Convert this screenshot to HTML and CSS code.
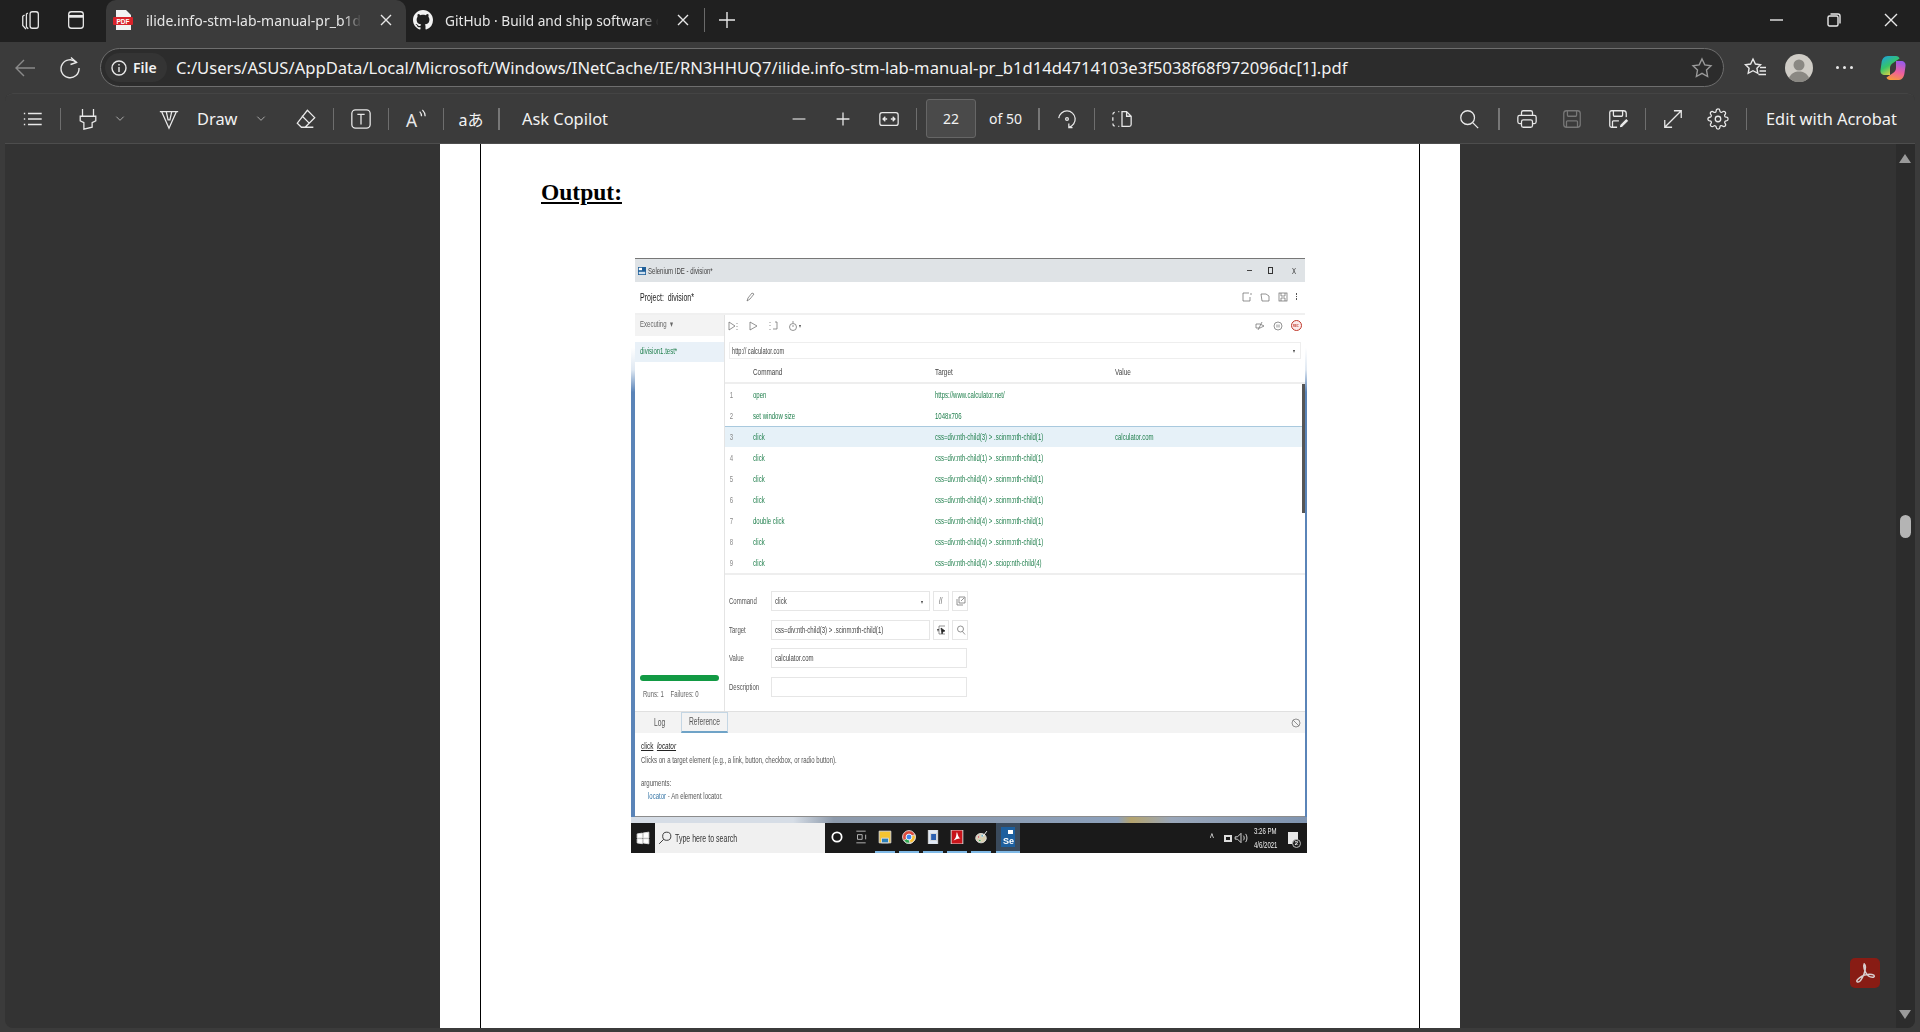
FILE: index.html
```html
<!DOCTYPE html>
<html lang="en">
	<head>
		<meta charset="UTF-8" />
		<title>ilide.info-stm-lab-manual-pr_b1d14d4714103e3f5038f68f972096dc[1].pdf</title>
		<link rel="stylesheet" href="styles.css">
	</head>
	<body>
		<!-- tab strip -->
		<div class="tabstrip">
			<svg class="ico strip-ico" viewBox="0 0 24 24"><rect x="11" y="3" width="9" height="18" rx="2.500"/><path d="M8.500 4.500L7 5.500v14l2 2M5 6.500L3 8v10l3.500 4"/></svg>
			<svg class="ico strip-ico" viewBox="0 0 24 24"><rect x="4" y="3" width="16" height="18" rx="3"/><path d="M4 8h16" stroke-width="3"/></svg>
			<div class="tab tab-active">
				<svg class="fav" viewBox="0 0 20 20"><path d="M3 0h10l5 5v15H3z" fill="#f2f2f2"/><rect x="0" y="7" width="20" height="8" rx="1" fill="#d8232a"/><text x="10" y="13.500" class="fav-text">PDF</text></svg>
				<span class="tab-title">ilide.info-stm-lab-manual-pr_b1d</span>
				<svg class="ico tab-x" viewBox="0 0 12 12"><path d="M1 1l10 10M11 1L1 11"/></svg>
			</div>
			<div class="tab tab-github">
				<svg class="fav" viewBox="0 0 16 16"><path fill="#f2f2f2" d="M8 0C3.58 0 0 3.58 0 8c0 3.54 2.29 6.53 5.47 7.59.4.07.55-.17.55-.38 0-.19-.01-.82-.01-1.49-2.01.37-2.53-.49-2.69-.94-.09-.23-.48-.94-.82-1.13-.28-.15-.68-.52-.01-.53.63-.01 1.08.58 1.23.82.72 1.21 1.87.87 2.33.66.07-.52.28-.87.51-1.07-1.78-.2-3.64-.89-3.64-3.95 0-.87.31-1.59.82-2.15-.08-.2-.36-1.02.08-2.12 0 0 .67-.21 2.2.82.64-.18 1.32-.27 2-.27.68 0 1.36.09 2 .27 1.53-1.04 2.2-.82 2.2-.82.44 1.1.16 1.92.08 2.12.51.56.82 1.27.82 2.15 0 3.07-1.87 3.75-3.65 3.95.29.25.54.730.54 1.48 0 1.07-.01 1.93-.01 2.2 0 .21.15.46.55.38A8.013 8.013 0 0016 8c0-4.42-3.58-8-8-8z"/></svg>
				<span class="tab-title">GitHub · Build and ship software c</span>
				<svg class="ico tab-x" viewBox="0 0 12 12"><path d="M1 1l10 10M11 1L1 11"/></svg>
			</div>
			<i class="tab-sep"></i>
			<svg class="ico new-tab" viewBox="0 0 16 16"><path d="M8 0v16M0 8h16"/></svg>
			<div class="win-controls">
				<svg class="ico" viewBox="0 0 14 14"><path d="M0 7h13"/></svg>
				<svg class="ico" viewBox="0 0 14 14"><rect x="1" y="3" width="10" height="10" rx="1.500"/><path d="M3.500 1h7.500a2 2 0 0 1 2 2v7.500"/></svg>
				<svg class="ico" viewBox="0 0 14 14"><path d="M1 1l12 12M13 1L1 13"/></svg>
			</div>
		</div>

		<!-- address bar -->
		<div class="navbar">
			<svg class="ico nav-btn dim" viewBox="0 0 24 24"><path d="M22 12H3M11 4l-8 8 8 8"/></svg>
			<svg class="ico nav-btn" viewBox="0 0 24 24"><path d="M18.500 6.500A9 9 0 1 0 21 12"/><path d="M13 1.500l5.500 5-6 2"/></svg>
			<div class="address">
				<div class="file-pill">
					<svg class="ico info" viewBox="0 0 16 16"><circle cx="8" cy="8" r="7"/><path d="M8 7v5M8 4v1.500"/></svg>
					<b>File</b>
				</div>
				<span class="url">C:/Users/ASUS/AppData/Local/Microsoft/Windows/INetCache/IE/RN3HHUQ7/ilide.info-stm-lab-manual-pr_b1d14d4714103e3f5038f68f972096dc[1].pdf</span>
				<svg class="ico star" viewBox="0 0 24 24"><path d="M12 3l2.800 5.900 6.200.8-4.500 4.400 1.100 6.400-5.600-3.100-5.600 3.100 1.100-6.400L3 9.700l6.200-.8z"/></svg>
			</div>
			<svg class="ico nav-side fav-list" viewBox="0 0 24 24"><path d="M10 3l2.400 5 5.100.7-3.600 3.500.9 5.100-4.800-2.600-4.800 2.600.9-5.100L2.500 8.700l5.100-.7zM17 11.500h6M16.500 15h6.500M15.500 18.500H23"/></svg>
			<svg class="avatar" viewBox="0 0 28 28"><circle cx="14" cy="14" r="14" fill="#cfccc6"/><circle cx="14" cy="11" r="5.500" fill="#8a8883"/><path d="M4 24c2-5 6-6.500 10-6.500s8 1.500 10 6.500a14 14 0 0 1-20 0z" fill="#8a8883"/></svg>
			<div class="dots"><i></i><i></i><i></i></div>
			<svg class="copilot" viewBox="0 0 28 28">
				<defs>
					<linearGradient id="cpa" x1="0" y1="0" x2=".6" y2="1"><stop offset="0" stop-color="#1b9de8"/><stop offset=".55" stop-color="#35c46a"/><stop offset="1" stop-color="#f4d03f"/></linearGradient>
					<linearGradient id="cpb" x1=".6" y1="0" x2=".3" y2="1"><stop offset="0" stop-color="#9a5be8"/><stop offset=".55" stop-color="#ef5f9c"/><stop offset="1" stop-color="#f79a3c"/></linearGradient>
				</defs>
				<path fill="url(#cpa)" d="M9 2h8c2 0 3 1 3.500 2.500L14 9c-2 1.300-3 3-3 5v7H6c-3 0-5-2-4.500-5l1-7C3 5 5 2 9 2z"/>
				<path fill="url(#cpb)" d="M19 26h-8c-2 0-3-1-3.500-2.500L14 19c2-1.300 3-3 3-5V7h5c3 0 5 2 4.500 5l-1 7c-.5 4-2.500 7-5.500 7z"/>
			</svg>
		</div>

		<!-- pdf toolbar and viewer -->
		<div class="pdf-panel">
			<div class="pdfbar">
				<div class="group group-left">
					<svg class="ico btn" viewBox="0 0 24 24"><path d="M6.500 6h15M6.500 12h15M6.500 18h15M2 6h1.500M2 12h1.500M2 18h1.500"/></svg>
					<i class="sep"></i>
					<svg class="ico btn" viewBox="0 0 24 24"><path d="M6 1v8h12V1M3.500 9h17v5l-4 2v5l-9 2v-7l-4-2z"/></svg>
					<svg class="ico chev ml-6" viewBox="0 0 12 12"><path d="M2 4l4 4 4-4"/></svg>
					<svg class="ico btn ml-23" viewBox="0 0 24 24"><path d="M2 4h20M4 4l8 18 8-18M9 4l2 9h2l2-9"/></svg>
					<span class="tb-text draw-label">Draw</span>
					<svg class="ico chev ml-16" viewBox="0 0 12 12"><path d="M2 4l4 4 4-4"/></svg>
					<svg class="ico btn ml-19" viewBox="0 0 24 24"><path d="M13.500 2.500l8 8L11 21H7l-4.500-4.500zM7.500 8.500l8 8M7 21h13"/></svg>
					<i class="sep"></i>
					<svg class="ico btn" viewBox="0 0 24 24"><rect x="2" y="2" width="20" height="20" rx="4"/><path d="M8 7h8M12 7v11"/></svg>
					<i class="sep"></i>
					<svg class="ico btn" viewBox="0 0 24 24"><text x="1" y="21" class="icon-letter">A</text><path d="M16 4c1.500 1.500 2 3 2 5M19 2c2 2 3 4.500 3 7"/></svg>
					<i class="sep"></i>
					<span class="btn translate">aあ</span>
					<i class="sep sep-strong"></i>
					<span class="tb-text ask">Ask Copilot</span>
				</div>
				<div class="group group-center">
					<svg class="ico btn" viewBox="0 0 24 24"><path d="M5 12h14" stroke="#bdbdbd"/></svg>
					<svg class="ico btn ml-8" viewBox="0 0 24 24"><path d="M5 12h14M12 5v14"/></svg>
					<svg class="ico btn ml-10" viewBox="0 0 24 24"><rect x="2" y="5" width="20" height="14" rx="2.500"/><path d="M10 12H5.500M8 9.500L5.500 12 8 14.500M14 12h4.500M16 9.500l2.500 2.500-2.500 2.500"/></svg>
					<i class="sep"></i>
					<div class="page-box">22</div>
					<span class="tb-text of-pages">of 50</span>
					<i class="sep sep-strong ml-16"></i>
					<svg class="ico btn" viewBox="0 0 24 24"><path d="M3 11a9 9 0 1 1 11 10M14 17v4.500h4"/><circle cx="12" cy="12" r="1.500"/></svg>
					<i class="sep"></i>
					<svg class="ico btn" viewBox="0 0 24 24"><path d="M12 4h5l5 5v9a2 2 0 0 1-2 2h-8zM17 4v5h5M9 4H8M4 4.500C3 5 2 5.500 2 7M2 10v4M2 17c0 1.500.5 2.500 2 2.800M8 20h1"/></svg>
				</div>
				<div class="group group-right">
					<svg class="ico btn" viewBox="0 0 24 24"><circle cx="10.500" cy="10.500" r="7.500"/><path d="M16 16l6 6"/></svg>
					<i class="sep sep-strong ml-11"></i>
					<svg class="ico btn" viewBox="0 0 24 24"><path d="M6 8V5a2 2 0 0 1 2-2h8a2 2 0 0 1 2 2v3M6 17H4a2 2 0 0 1-2-2v-5a2 2 0 0 1 2-2h16a2 2 0 0 1 2 2v5a2 2 0 0 1-2 2h-2"/><rect x="6" y="13" width="12" height="8" rx="2"/></svg>
					<svg class="ico btn btn-off ml-9" viewBox="0 0 24 24"><rect x="3" y="3" width="18" height="18" rx="3"/><path d="M7 3v5a1 1 0 0 0 1 1h8a1 1 0 0 0 1-1V3M6 21v-6a1 1 0 0 1 1-1h10a1 1 0 0 1 1 1v6"/></svg>
					<svg class="ico btn ml-10" viewBox="0 0 24 24"><path d="M11 21H5a2 2 0 0 1-2-2V5a2 2 0 0 1 2-2h13a3 3 0 0 1 3 3v4M7 3v5a1 1 0 0 0 1 1h8a1 1 0 0 0 1-1V3M6 21v-6a1 1 0 0 1 1-1h6"/><path class="pen" d="M13 22l1-4 7-7 3 3-7 7z"/></svg>
					<i class="sep"></i>
					<svg class="ico btn" viewBox="0 0 24 24"><path d="M3 21L21 3M13 3h8v8M3 13v8h8"/></svg>
					<svg class="ico btn ml-9" viewBox="0 0 24 24"><circle cx="12" cy="12" r="3"/><path d="M19.400 15a1.650 1.650 0 0 0 .33 1.820l.06.06a2 2 0 0 1 0 2.830 2 2 0 0 1-2.830 0l-.06-.06a1.650 1.650 0 0 0-1.820-.33 1.650 1.650 0 0 0-1 1.510V21a2 2 0 0 1-2 2 2 2 0 0 1-2-2v-.09A1.650 1.650 0 0 0 9 19.400a1.650 1.650 0 0 0-1.820.33l-.06.06a2 2 0 0 1-2.830 0 2 2 0 0 1 0-2.830l.06-.06a1.650 1.650 0 0 0 .33-1.820 1.650 1.650 0 0 0-1.510-1H3a2 2 0 0 1-2-2 2 2 0 0 1 2-2h.09A1.650 1.650 0 0 0 4.600 9a1.650 1.650 0 0 0-.33-1.820l-.06-.06a2 2 0 0 1 0-2.830 2 2 0 0 1 2.830 0l.06.06a1.650 1.650 0 0 0 1.820.33H9a1.650 1.650 0 0 0 1-1.510V3a2 2 0 0 1 2-2 2 2 0 0 1 2 2v.09a1.650 1.650 0 0 0 1 1.510 1.650 1.650 0 0 0 1.820-.33l.06-.06a2 2 0 0 1 2.830 0 2 2 0 0 1 0 2.830l-.06.06a1.650 1.650 0 0 0-.33 1.820V9a1.650 1.650 0 0 0 1.510 1H21a2 2 0 0 1 2 2 2 2 0 0 1-2 2h-.09a1.650 1.650 0 0 0-1.510 1z"/></svg>
					<i class="sep ml-10"></i>
					<span class="tb-text edit">Edit with Acrobat</span>
				</div>
			</div>

			<div class="viewer">
				<div class="page">
					<div class="page-frame">
						<h1 class="output-title">Output:</h1>

						<!-- screenshot pasted in the pdf -->
						<div class="shot">
							<div class="win-edge">
								<div class="win">
									<div class="win-title">
										<svg class="se-logo" viewBox="0 0 10 10"><rect width="10" height="10" fill="#1f5f99"/><rect x="1" y="1" width="4" height="3" fill="#fff"/><rect x="1" y="6" width="8" height="3" fill="#cfe0ef"/></svg>
										<span>Selenium IDE - division*</span>
										<div class="win-btns"><i class="w-min"></i><i class="w-max"></i><span class="w-close">X</span></div>
									</div>
									<div class="project">
										<span class="project-name">Project:&nbsp; division*</span>
										<svg class="mini pencil" viewBox="0 0 10 10"><path d="M2 9l1-3 4-5 2 1-4 5z"/></svg>
										<div class="project-icons">
											<svg class="mini" viewBox="0 0 10 10"><path d="M7 1H1v8h7V5M9 1v2"/></svg>
											<svg class="mini" viewBox="0 0 10 10"><path d="M1 2h5l3 2v5H2z"/></svg>
											<svg class="mini" viewBox="0 0 10 10"><rect x="1" y="1" width="8" height="8"/><path d="M3 1v3h4V1M3 9V6h4v3"/></svg>
											<div class="kebab"><i></i><i></i><i></i></div>
										</div>
									</div>
									<div class="win-body">
										<div class="side">
											<div class="side-head"><span>Executing &nbsp;▾</span></div>
											<div class="side-item"><span>division1.test*</span></div>
											<div class="progress"></div>
											<div class="runs"><span>Runs: 1 &nbsp; &nbsp;Failures: 0</span></div>
										</div>
										<div class="main">
											<div class="run-bar">
												<svg class="mini" viewBox="0 0 10 10"><path d="M1 1l6 4-6 4zM9 2v1M9 5v1M9 8v1"/></svg>
												<svg class="mini" viewBox="0 0 10 10"><path d="M2 1l7 4-7 4z"/></svg>
												<svg class="mini" viewBox="0 0 10 10"><path d="M2 1v1M2 4v1M2 8v1M7 1h2v7H5"/></svg>
												<svg class="mini" viewBox="0 0 10 10"><circle cx="5" cy="6" r="3.500"/><path d="M4 1h2M5 6V4"/></svg>
												<span class="caret">▾</span>
												<div class="run-right">
													<svg class="mini" viewBox="0 0 10 10"><path d="M1 3h4l4 2-4 2H1zM7 1L3 9"/></svg>
													<svg class="mini" viewBox="0 0 10 10"><circle cx="5" cy="5" r="4"/><path d="M4 3.500v3M6 3.500v3"/></svg>
													<div class="rec"><span>REC</span></div>
												</div>
											</div>
											<div class="url-input"><span>http:// calculator.com</span><span class="caret url-caret">▾</span></div>
											<div class="cmd-head">
												<span class="col-cmd">Command</span>
												<span class="col-target">Target</span>
												<span class="col-value">Value</span>
											</div>
											<div class="cmd-rows">
												<div class="cmd"><span class="num">1</span><span class="col-cmd">open</span><span class="col-target">https://www.calculator.net/</span></div>
												<div class="cmd"><span class="num">2</span><span class="col-cmd">set window size</span><span class="col-target">1048x706</span></div>
												<div class="cmd cmd-on"><span class="num">3</span><span class="col-cmd">click</span><span class="col-target">css=div:nth-child(3) &gt; .scinm:nth-child(1)</span><span class="col-value">calculator.com</span></div>
												<div class="cmd"><span class="num">4</span><span class="col-cmd">click</span><span class="col-target">css=div:nth-child(1) &gt; .scinm:nth-child(1)</span></div>
												<div class="cmd"><span class="num">5</span><span class="col-cmd">click</span><span class="col-target">css=div:nth-child(4) &gt; .scinm:nth-child(1)</span></div>
												<div class="cmd"><span class="num">6</span><span class="col-cmd">click</span><span class="col-target">css=div:nth-child(4) &gt; .scinm:nth-child(1)</span></div>
												<div class="cmd"><span class="num">7</span><span class="col-cmd">double click</span><span class="col-target">css=div:nth-child(4) &gt; .scinm:nth-child(1)</span></div>
												<div class="cmd"><span class="num">8</span><span class="col-cmd">click</span><span class="col-target">css=div:nth-child(4) &gt; .scinm:nth-child(1)</span></div>
												<div class="cmd"><span class="num">9</span><span class="col-cmd">click</span><span class="col-target">css=div:nth-child(4) &gt; .sciop:nth-child(4)</span></div>
												<i class="cmd-scroll"></i>
											</div>
											<div class="form">
												<div class="form-row">
													<span class="form-label">Command</span>
													<div class="field field-short"><span>click</span><span class="caret url-caret">▾</span></div>
													<div class="field-btn"><span>//</span></div>
													<div class="field-btn"><svg class="mini" viewBox="0 0 10 10"><path d="M3 1h6v6H3zM1 3v6h6M5 5l3-3"/></svg></div>
												</div>
												<div class="form-row">
													<span class="form-label">Target</span>
													<div class="field field-short"><span>css=div:nth-child(3) &gt; .scinm:nth-child(1)</span><span class="caret url-caret">▾</span></div>
													<div class="field-btn"><svg class="mini" viewBox="0 0 10 10"><path d="M8 1H2v8h6"/><path class="picker" d="M4 3l4 3-2 .5L5 9z"/></svg></div>
													<div class="field-btn"><svg class="mini" viewBox="0 0 10 10"><circle cx="4.500" cy="4" r="3"/><path d="M6.500 6.500L9 9.500"/></svg></div>
												</div>
												<div class="form-row">
													<span class="form-label">Value</span>
													<div class="field"><span>calculator.com</span></div>
												</div>
												<div class="form-row">
													<span class="form-label">Description</span>
													<div class="field"></div>
												</div>
											</div>
										</div>
									</div>
									<div class="log-tabs">
										<span class="log-tab">Log</span>
										<div class="ref-tab"><span>Reference</span></div>
										<svg class="mini ban" viewBox="0 0 10 10"><circle cx="5" cy="5" r="4"/><path d="M2.200 2.200l5.600 5.600"/></svg>
									</div>
									<div class="ref">
										<div class="ref-title"><span><u>click</u> &nbsp;<u><em>locator</em></u></span></div>
										<div class="ref-line"><span>Clicks on a target element (e.g., a link, button, checkbox, or radio button).</span></div>
										<div class="ref-line ref-args"><span>arguments:</span></div>
										<div class="ref-line ref-arg"><span><b>locator</b> - An element locator.</span></div>
									</div>
								</div>
							</div>
							<div class="behind"></div>
							<div class="taskbar">
								<div class="start"><svg class="t-ico" viewBox="0 0 12 12"><path fill="#fff" d="M1 2.500l4.500-.7V6H1zM6.200 1.700L11 1v5H6.200zM1 6.700h4.500v4.200L1 10.200zM6.200 6.700H11V11l-4.800-.7z"/></svg></div>
								<div class="search">
									<svg class="t-ico search-ico" viewBox="0 0 12 12"><circle cx="7.500" cy="4.500" r="3.500"/><path d="M5 7l-4 4"/></svg>
									<span>Type here to search</span>
								</div>
								<div class="task"><svg class="t-ico" viewBox="0 0 12 12"><circle class="cortana" cx="6" cy="6" r="4"/></svg></div>
								<div class="task"><svg class="t-ico" viewBox="0 0 12 12"><path class="taskview" d="M2 1h8M2 11h8M3 4h4v4H3zM10 4v4"/></svg></div>
								<div class="task task-open"><svg class="t-ico" viewBox="0 0 12 12"><path fill="#f4c430" d="M1 1h10v10H1z"/><path fill="#2a7fb8" d="M3 7h6v4H3z"/></svg></div>
								<div class="task task-open"><svg class="t-ico" viewBox="0 0 12 12"><circle cx="6" cy="6" r="5.500" fill="#dd4b3e"/><path fill="#2da94f" d="M6 6L1.500 9A5.500 5.500 0 0 0 7 11.400z"/><path fill="#fbc02d" d="M6 6l5 -2a5.500 5.500 0 0 1-4 7.400z"/><circle cx="6" cy="6" r="2.500" fill="#3f85f0" stroke="#fff" stroke-width=".8"/></svg></div>
								<div class="task task-open"><svg class="t-ico" viewBox="0 0 12 12"><path fill="#dfe8f5" d="M2 0h8v12H2z"/><path fill="#2b5fb0" d="M4 3h5v6H4z"/></svg></div>
								<div class="task task-open"><svg class="t-ico" viewBox="0 0 12 12"><rect x="1" y="0" width="10" height="12" fill="#c8141a"/><path class="acro" d="M6 2c-1 0 .5 4-3 7 3-1 4-2 6-1.500C7 6.500 6.500 3 6 2z"/></svg></div>
								<div class="task task-open"><svg class="t-ico" viewBox="0 0 12 12"><ellipse cx="6" cy="7" rx="4.500" ry="4" fill="#d9cfae"/><circle cx="4" cy="6" r="1" fill="#d33"/><circle cx="7" cy="5" r="1" fill="#29b"/><circle cx="5" cy="9" r="1" fill="#3a3"/><path d="M8 5l3-4" stroke="#fff"/></svg></div>
								<div class="task task-open task-se"><div class="se-tile"><i></i><span>Se</span></div></div>
								<div class="tray">
									<span class="tray-caret">^</span>
									<i class="tray-batt"></i>
									<svg class="t-ico tray-vol" viewBox="0 0 12 12"><path d="M1 5h2l3-3v8L3 7H1zM8 4c1 1 1 3 0 4M10 2.500c1.500 2 1.500 5 0 7"/></svg>
									<div class="clock"><span>3:26 PM</span><span>4/6/2021</span></div>
									<div class="notif"><i></i><b>2</b></div>
								</div>
							</div>
						</div>
					</div>
				</div>
				<div class="scrollbar">
					<i class="arrow-up"></i>
					<i class="thumb"></i>
					<i class="arrow-down"></i>
				</div>
				<div class="acrobat-fab">
					<svg viewBox="0 0 24 24"><path d="M12 3c-1.800 0-1.500 3.500.2 7.500 1.700 3.800 4.300 5.800 7.300 5.800 2.500 0 2.500-2.300-.5-2.800-3.500-.5-9 .8-12.500 3.300-2.500 1.800-3.500 3.700-2 4.200 1.700.5 4.500-3 6.500-8 1.500-3.800 2.500-10-.5-10z"/></svg>
				</div>
			</div>
		</div>
	</body>
</html>
```

FILE: styles.css
```css
* {
	box-sizing: border-box;
}
html, body {
	margin: 0;
	height: 1032px;
	overflow: hidden;
}
body {
	background: #3b3b3b;
	color: #f2f2f2;
	font-family: "Noto Sans", "Open Sans", sans-serif;
	display: flex;
	flex-direction: column;
}
.ico {
	fill: none;
	stroke: #e8e8e8;
	stroke-width: 1.4;
	flex: none;
	overflow: visible;
}

/* tab strip */
.tabstrip {
	height: 42px;
	background: #202020;
	display: flex;
	align-items: center;
	padding-left: 20px;
	flex: none;
}
.strip-ico {
	width: 22px;
	height: 22px;
	margin: 0 23px 2px 0;
}
.strip-ico + .strip-ico {
	margin-right: 19px;
}
.tab {
	width: 290px;
	height: 42px;
	display: flex;
	align-items: center;
	padding: 0 12px 2px 10px;
	font-size: 14px;
	color: #e6e6e6;
}
.tab-active {
	width: 300px;
	background: #3b3b3b;
	border-radius: 10px 10px 0 0;
	padding: 0 14px 2px 7px;
}
.tab-github {
	padding: 0 7px 2px 7px;
	font-size: 13.700px;
}
.fav {
	width: 20px;
	height: 20px;
	flex: none;
	margin-right: 13px;
}
.tab-github .fav {
	margin-right: 12px;
}
.fav-text {
	font-family: "Liberation Sans", sans-serif;
	font-size: 6.500px;
	font-weight: bold;
	fill: #fff;
	text-anchor: middle;
}
.tab-title {
	flex: 1;
	white-space: nowrap;
	-webkit-mask-image: linear-gradient(to right, #000 90%, transparent 98%);
	mask-image: linear-gradient(to right, #000 90%, transparent 98%);
}
.tab-x {
	width: 12px;
	height: 12px;
	margin-left: 14px;
}
.tab-sep {
	width: 1px;
	height: 24px;
	background: #6a6a6a;
	margin: 0 0 2px 8px;
}
.new-tab {
	width: 16px;
	height: 16px;
	margin: 0 0 2px 14px;
}
.win-controls {
	margin-left: auto;
	display: flex;
	align-items: center;
	gap: 43px;
	padding: 0 22px 2px 0;
}
.win-controls svg {
	width: 14px;
	height: 14px;
}

/* address bar */
.navbar {
	height: 51px;
	display: flex;
	align-items: center;
	flex: none;
	padding-left: 13px;
}
.nav-btn {
	width: 24px;
	height: 24px;
	margin-right: 21px;
}
.nav-btn.dim {
	stroke: #8a8a8a;
}
.nav-btn + .address {
	margin-left: -3px;
}
.address {
	width: 1624px;
	height: 39px;
	border: 1px solid #6e6e6e;
	border-radius: 20px;
	background: #2c2c2c;
	display: flex;
	align-items: center;
	padding: 0 9px 0 4px;
}
.file-pill {
	height: 29px;
	width: 62px;
	border-radius: 15px;
	background: #343434;
	display: flex;
	align-items: center;
	padding-left: 6px;
	font-size: 14px;
	flex: none;
}
.file-pill b {
	font-weight: 600;
}
.info {
	width: 16px;
	height: 16px;
	margin-right: 6px;
}
.url {
	margin-left: 9px;
	font-size: 16.600px;
	white-space: nowrap;
	flex: 1;
}
.star {
	width: 24px;
	height: 24px;
	stroke: #9a9a9a;
}
.nav-side {
	width: 24px;
	height: 24px;
	margin-left: 19px;
}
.avatar {
	width: 28px;
	height: 28px;
	margin-left: 18px;
	flex: none;
}
.dots {
	display: flex;
	gap: 4px;
	margin-left: 23px;
}
.dots i {
	width: 3px;
	height: 3px;
	border-radius: 50%;
	background: #e8e8e8;
}
.copilot {
	width: 28px;
	height: 28px;
	margin-left: 26px;
	flex: none;
}

/* pdf toolbar */
.pdf-panel {
	margin: 0 5px 4px;
	flex: 1;
	min-height: 0;
	display: flex;
	flex-direction: column;
	border-radius: 8px;
	overflow: hidden;
	background: #333;
}
.pdfbar {
	height: 51px;
	flex: none;
	background: #3b3b3b;
	border-top: 1px solid #444;
	border-bottom: 1px solid #4d4d4d;
	border-radius: 8px 8px 0 0;
	display: flex;
	align-items: center;
	padding: 0 17px 0 10px;
	font-size: 16.400px;
}
.group {
	display: flex;
	align-items: center;
}
.group-center {
	margin-left: 170px;
}
.group-right {
	margin-left: auto;
}
.btn {
	width: 36px;
	height: 22px;
	padding: 0 7px;
	flex: none;
}
.btn-off {
	stroke: #777;
}
.pen {
	fill: #e8e8e8;
	stroke: #3b3b3b;
}
.icon-letter {
	font-size: 19px;
	font-family: "Noto Sans", sans-serif;
	fill: #e8e8e8;
	stroke: none;
}
.translate {
	height: auto;
	padding: 0;
	text-align: center;
	font-size: 16px;
	font-family: "Noto Sans", "Noto Sans CJK JP", sans-serif;
	white-space: nowrap;
}
.chev {
	width: 16px;
	height: 11px;
	stroke: #b5b5b5;
	stroke-width: 1;
}
.sep {
	width: 1px;
	height: 22px;
	background: #6e6e6e;
	margin: 0 9px;
	flex: none;
}
.sep-strong {
	width: 2px;
	background: #777;
}
.tb-text {
	white-space: nowrap;
}
.draw-label {
	margin-left: 10px;
	width: 40px;
}
.ask {
	margin-left: 13px;
	width: 89px;
}
.of-pages {
	margin-left: 13px;
	width: 33px;
	font-size: 14px;
}
.edit {
	margin-left: 10px;
	width: 132px;
}
.page-box {
	width: 50px;
	height: 39px;
	background: #4a4a4a;
	border: 1px solid #666;
	border-radius: 3px;
	display: flex;
	align-items: center;
	justify-content: center;
	font-size: 14px;
}
.ml-6 { margin-left: 6px; }
.ml-8 { margin-left: 8px; }
.ml-9 { margin-left: 9px; }
.ml-10 { margin-left: 10px; }
.ml-11 { margin-left: 11px; }
.ml-16 { margin-left: 16px; }
.ml-19 { margin-left: 19px; }
.ml-23 { margin-left: 23px; }

/* viewer */
.viewer {
	flex: 1;
	min-height: 0;
	display: flex;
	position: relative;
	padding-left: 435px;
}
.page {
	width: 1020px;
	background: #fff;
	padding-left: 40px;
	color: #000;
	overflow: hidden;
}
.page-frame {
	width: 940px;
	height: 100%;
	border-left: 1px solid #000;
	border-right: 1px solid #000;
	padding-top: 34px;
}
.output-title {
	margin: 0 0 0 60px;
	font: bold 23.500px/28px "Liberation Serif", serif;
	text-decoration: underline;
}
.scrollbar {
	margin-left: auto;
	width: 19px;
	background: #2c2c2c;
	position: relative;
}
.arrow-up, .arrow-down {
	position: absolute;
	left: 3px;
	border-left: 6.500px solid transparent;
	border-right: 6.500px solid transparent;
}
.arrow-up {
	top: 10px;
	border-bottom: 9px solid #9a9a9a;
}
.arrow-down {
	bottom: 9px;
	border-top: 9px solid #9a9a9a;
}
.thumb {
	position: absolute;
	left: 4px;
	top: 371px;
	width: 11px;
	height: 23px;
	border-radius: 6px;
	background: #b4b4b4;
}
.acrobat-fab {
	position: absolute;
	left: 1845px;
	top: 814px;
	width: 30px;
	height: 30px;
	background: #881c14;
	border-radius: 5px;
	padding: 3px;
}
.acrobat-fab svg {
	display: block;
	fill: none;
	stroke: #d8cfcf;
	stroke-width: 1.500;
}

/* screenshot inside the pdf */
.shot {
	margin: 52px 0 0 150px;
	width: 676px;
	height: 595px;
	display: flex;
	flex-direction: column;
	font-family: "Liberation Sans", sans-serif;
	font-size: 9px;
	color: #555;
	filter: blur(.3px);
}
.shot span {
	display: inline-block;
	white-space: nowrap;
	transform: scaleX(.67);
	transform-origin: left center;
}
.mini {
	width: 10px;
	height: 10px;
	fill: none;
	stroke: #666;
	stroke-width: .7;
	flex: none;
}
.win-edge {
	height: 559px;
	padding: 0 2px 0 4px;
	flex: none;
	background: linear-gradient(#fff 0, #fff 16%, #dfe8f2 20%, #5a84b8 24%, #5a84b8 100%);
}
.win {
	height: 100%;
	background: #fff;
	display: flex;
	flex-direction: column;
	border-top: 1px solid #777;
	border-bottom: 1px solid #8c8c8c;
}
.win-title {
	height: 23px;
	flex: none;
	background: #dfe3e6;
	display: flex;
	align-items: center;
	padding-left: 3px;
	color: #444;
}
.se-logo {
	width: 8px;
	height: 12px;
	margin-right: 2px;
	flex: none;
}
.win-btns {
	margin-left: auto;
	width: 60px;
	display: flex;
	align-items: center;
	gap: 16px;
	padding-left: 2px;
	color: #333;
}
.win-btns .w-min {
	width: 5px;
	height: 1px;
	background: #444;
}
.win-btns .w-max {
	width: 5px;
	height: 7px;
	border: 1px solid #333;
}
.win-btns .w-close {
	margin-left: 3px;
}
.project {
	height: 33px;
	flex: none;
	display: flex;
	align-items: center;
	padding: 0 8px 2px 5px;
	border-bottom: 2px solid #f0f0f0;
}
.project-name {
	color: #222;
	font-size: 10.500px;
	width: 105px;
}
.project-icons {
	margin-left: auto;
	display: flex;
	align-items: center;
	gap: 8px;
}
.kebab {
	display: flex;
	flex-direction: column;
	gap: 1px;
}
.kebab i {
	width: 1.500px;
	height: 1.500px;
	background: #555;
}
.win-body {
	height: 396px;
	flex: none;
	display: flex;
}
.side {
	width: 90px;
	flex: none;
	display: flex;
	flex-direction: column;
	border-right: 1px solid #e4e4e4;
}
.side-head {
	height: 21px;
	background: #f3f3f3;
	padding: 4px 0 0 5px;
	color: #666;
}
.side-item {
	height: 20px;
	margin-top: 6px;
	background: #e9f1f8;
	padding: 4px 0 0 5px;
	color: #1f7f4c;
}
.progress {
	margin: auto 5px 0;
	height: 6px;
	border-radius: 3px;
	background: #129a44;
}
.runs {
	padding: 8px 0 10px 8px;
	height: 30px;
	color: #666;
}
.main {
	flex: 1;
	min-width: 0;
	display: flex;
	flex-direction: column;
}
.run-bar {
	height: 21px;
	flex: none;
	display: flex;
	align-items: center;
	padding: 0 3px 0 3px;
	gap: 10px;
}
.caret {
	font-size: 6px;
	margin-left: -9px;
}
.run-right {
	margin-left: auto;
	display: flex;
	align-items: center;
	gap: 8px;
}
.rec {
	width: 11px;
	height: 11px;
	border: 1px solid #c0392b;
	border-radius: 50%;
	background: #fbeaea;
	color: #c0392b;
	font-size: 4px;
	line-height: 9px;
	font-weight: bold;
	text-align: left;
	padding-left: 1px;
}
.url-input {
	margin: 6px 4px 0;
	height: 17px;
	flex: none;
	border: 1px solid #eee;
	display: flex;
	align-items: center;
	padding: 0 4px 0 2px;
	color: #444;
	font-size: 8.500px;
}
.url-caret {
	margin-left: auto;
}
.cmd-head {
	height: 25px;
	flex: none;
	display: flex;
	align-items: center;
	padding: 1px 0 0 28px;
	color: #444;
	font-size: 9.500px;
	border-bottom: 2px solid #eee;
}
.cmd-rows {
	position: relative;
	flex: none;
	border-bottom: 2px solid #eee;
}
.cmd {
	height: 21px;
	display: flex;
	align-items: center;
	color: #1f7f4c;
	font-size: 9px;
}
.cmd-on {
	background: #e6f1f8;
	border-top: 1px solid #a9c9de;
}
.num {
	width: 28px;
	padding-left: 7px;
	color: #888;
	flex: none;
}
.col-cmd {
	width: 182px;
	flex: none;
}
.col-target {
	width: 180px;
	flex: none;
}
.cmd-scroll {
	position: absolute;
	right: 0;
	top: 0;
	width: 3px;
	height: 129px;
	background: #555;
}
.form {
	display: flex;
	flex-direction: column;
	gap: 8.700px;
	padding: 16px 0 0 4px;
}
.form-row {
	height: 20px;
	display: flex;
	align-items: center;
	gap: 2px;
}
.form-label {
	width: 40px;
	flex: none;
	color: #555;
}
.field {
	width: 196px;
	height: 100%;
	border: 1px solid #e6e6e6;
	display: flex;
	align-items: center;
	padding: 0 5px 0 3px;
	color: #444;
}
.field-short {
	width: 159px;
}
.field-btn {
	width: 16px;
	height: 100%;
	border: 1px solid #e6e6e6;
	display: flex;
	align-items: center;
	justify-content: center;
	margin-left: 1px;
	padding-left: 1px;
}
.picker {
	fill: #222;
	stroke: #222;
}
.log-tabs {
	height: 22px;
	flex: none;
	background: #f3f3f3;
	border-top: 1px solid #e0e0e0;
	display: flex;
	align-items: center;
	position: relative;
	padding-left: 19px;
	color: #555;
}
.log-tab {
	width: 27px;
	font-size: 10px;
}
.ref-tab {
	width: 47px;
	height: 100%;
	border: 1px solid #c4d6e4;
	border-bottom: 2px solid #6fa3c7;
	padding: 3px 0 0 7px;
	font-size: 10px;
}
.ban {
	margin-left: auto;
	margin-right: 4px;
}
.ref {
	flex: 1;
	padding: 6px 0 0 6px;
	color: #555;
	line-height: 13px;
}
.ref-title {
	color: #222;
	font-size: 9.500px;
	height: 15px;
}
.ref-line {
	height: 13px;
}
.ref-args {
	margin-top: 10px;
}
.ref-arg {
	padding-left: 7px;
}
.ref-arg b {
	font-weight: normal;
	color: #3a78a8;
}
.behind {
	height: 6px;
	flex: none;
	background: linear-gradient(to right, #d6dde6 0, #d6dde6 24%, #8d9aab 30%, #8ca0bb 72%, #b5a46e 74%, #9aa7ba 80%, #7f94b0 100%);
}
.taskbar {
	height: 30px;
	flex: none;
	background: #1a1a1a;
	display: flex;
	align-items: stretch;
	color: #eee;
}
.t-ico {
	width: 14px;
	height: 14px;
	fill: none;
	stroke: #ddd;
	stroke-width: .8;
	flex: none;
}
.start {
	width: 24px;
	display: flex;
	align-items: center;
	justify-content: center;
}
.search {
	width: 170px;
	background: #f0f0f0;
	color: #333;
	display: flex;
	align-items: center;
	padding-left: 3px;
	font-size: 10.500px;
}
.search-ico {
	stroke: #333;
	margin-right: 3px;
}
.task {
	width: 20px;
	margin: 0 2px;
	display: flex;
	align-items: center;
	justify-content: center;
	border-bottom: 2px solid transparent;
}
.task-open {
	border-bottom-color: #7fb9e6;
}
.cortana {
	stroke: #fff;
	stroke-width: 1.500;
}
.taskview {
	stroke: #bbb;
}
.acro {
	fill: #fff;
	stroke: none;
}
.task-se {
	width: 24px;
	margin: 0 0 0 3px;
	background: #3a4a5c;
}
.se-tile {
	width: 14px;
	height: 20px;
	background: #1d5f9e;
	position: relative;
	color: #fff;
	font-size: 9px;
	font-weight: bold;
	padding-top: 9px;
	padding-left: 2px;
}
.se-tile i {
	position: absolute;
	right: 2px;
	top: 3px;
	width: 5px;
	height: 4px;
	background: #fff;
}
.shot .se-tile span {
	transform: none;
}
.tray {
	margin-left: auto;
	display: flex;
	align-items: center;
	padding-right: 9px;
}
.tray-caret {
	font-size: 12px;
	width: 10px;
}
.tray-batt {
	width: 8px;
	height: 7px;
	border: 2px solid #ddd;
	margin-left: 4px;
}
.tray-vol {
	margin-left: 2px;
}
.clock {
	display: flex;
	flex-direction: column;
	margin-left: 6px;
	width: 30px;
	gap: 4px;
	font-size: 9px;
	line-height: 10px;
}
.notif {
	position: relative;
	width: 10px;
	height: 12px;
	background: #e8e8e8;
	margin-left: 4px;
}
.notif b {
	position: absolute;
	right: -3px;
	bottom: -4px;
	width: 9px;
	height: 9px;
	border: 1px solid #bbb;
	border-radius: 50%;
	background: #222;
	font-size: 6px;
	line-height: 7px;
	text-align: center;
}
```
